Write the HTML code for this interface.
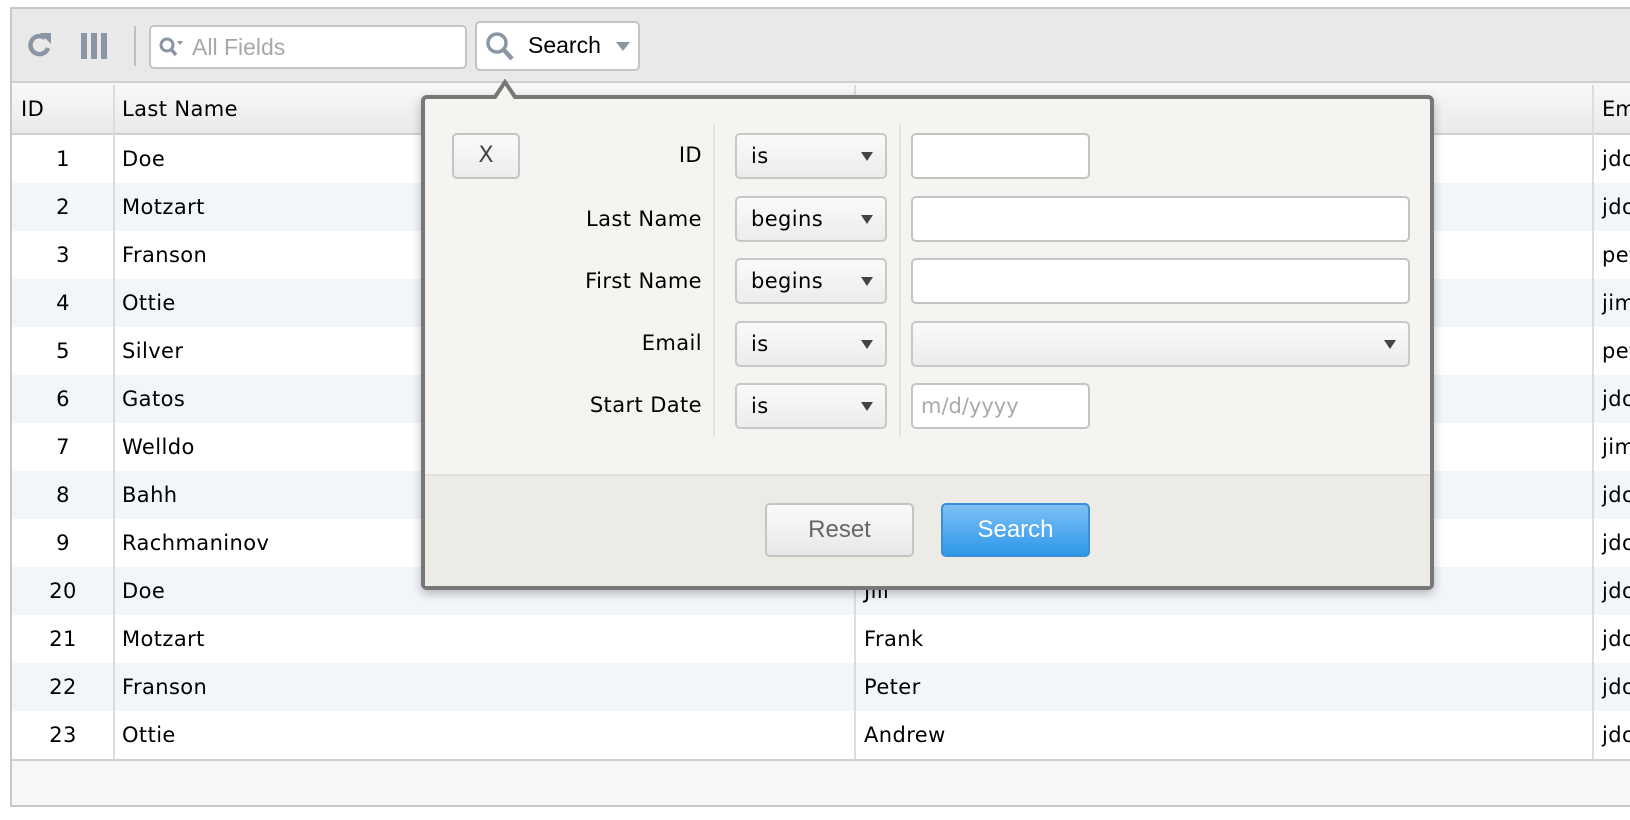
<!DOCTYPE html>
<html><head><meta charset="utf-8"><style>
*{box-sizing:border-box;margin:0;padding:0}
body{width:1630px;height:820px;background:#fff;position:relative;overflow:hidden;font-family:"DejaVu Sans","Liberation Sans",sans-serif;color:#000}
.abs{position:absolute}
#frame{left:10px;top:7px;width:1620px;height:800px;border:2px solid #c8c8c8;border-right:none;background:#f7f7f7}
#tb{left:12px;top:9px;width:1618px;height:74px;background:#e9e9e9;border-bottom:2px solid #cfcfcf}
#hdr{left:12px;top:85px;width:1618px;height:50px;background:linear-gradient(#f8f8f8,#eaeaea);border-bottom:2px solid #d0d0d0;font-size:20px}
.row{position:absolute;left:12px;width:1618px;height:48px;font-size:21px;line-height:48px;background:#fff;letter-spacing:0.4px;overflow:hidden}
.row.alt{background:#f2f5fa}
.c1{position:absolute;left:0;width:102px;text-align:center}
.c2{position:absolute;left:110px}
.c3{position:absolute;left:852px}
.c4{position:absolute;left:1590px}
.vl{position:absolute;top:85px;width:2px;height:674px;background:#dcdcdc;z-index:2}
.inp{background:#fff;border:2px solid #c4c4c4;border-radius:5px}
.sel{background:linear-gradient(#fafafa,#ececec);border:2px solid #c8c8c8;border-radius:5px;font-size:21px;line-height:42px;padding-left:14px;letter-spacing:0.4px}
.sel:after{content:"";position:absolute;right:12px;top:17px;border-left:6px solid transparent;border-right:6px solid transparent;border-top:9px solid #444}
.lbl{position:absolute;left:482px;font-size:21px;width:220px;text-align:right;letter-spacing:0.4px}
</style></head><body>
<div id="frame" class="abs"></div>
<div id="tb" class="abs"></div>
<svg class="abs" style="left:24px;top:30px" width="30" height="30" viewBox="0 0 30 30"><path d="M21 8A9 9 0 1 0 24 18" fill="none" stroke="#8a96a3" stroke-width="4.5"/><path d="M16 3L27 3L27 14Z" fill="#8a96a3"/></svg>
<div class="abs" style="left:81px;top:33px;width:6px;height:26px;background:#8a96a3"></div>
<div class="abs" style="left:91px;top:33px;width:6px;height:26px;background:#8a96a3"></div>
<div class="abs" style="left:101px;top:33px;width:6px;height:26px;background:#8a96a3"></div>
<div class="abs" style="left:134px;top:26px;width:2px;height:40px;background:#c0c0c0"></div>
<div class="abs inp" style="left:149px;top:25px;width:318px;height:44px"></div>
<svg class="abs" style="left:158px;top:36px" width="28" height="24" viewBox="0 0 28 24"><circle cx="9" cy="9" r="6" fill="none" stroke="#8a96a3" stroke-width="3"/><path d="M13 13L18 19" stroke="#8a96a3" stroke-width="3.5"/><path d="M19 5h6l-3 4z" fill="#8a96a3"/></svg>
<div class="abs" style="left:192px;top:34px;font-size:23px;color:#a8a8a8;font-family:'Liberation Sans',sans-serif">All Fields</div>
<div class="abs inp" style="left:475px;top:21px;width:165px;height:50px"></div>
<svg class="abs" style="left:484px;top:30px" width="34" height="34" viewBox="0 0 34 34"><circle cx="13" cy="13" r="9" fill="none" stroke="#8a96a3" stroke-width="3.5"/><path d="M19.5 19.5L28 29" stroke="#8a96a3" stroke-width="4.5"/></svg>
<div class="abs" style="left:528px;top:32px;font-size:23px;font-family:'Liberation Sans',sans-serif">Search</div>
<div class="abs" style="left:616px;top:42px;border-left:7px solid transparent;border-right:7px solid transparent;border-top:9px solid #8a96a3"></div>
<div id="hdr" class="abs"></div>
<div class="abs" style="left:21px;top:97px;font-size:21px;letter-spacing:0.4px">ID</div>
<div class="abs" style="left:122px;top:97px;font-size:21px;letter-spacing:0.4px">Last Name</div>
<div class="abs" style="left:1602px;top:97px;font-size:21px;width:28px;overflow:hidden;white-space:nowrap">Em</div>
<div class="vl" style="left:113px"></div><div class="vl" style="left:854px"></div><div class="vl" style="left:1592px"></div>
<div class="row" style="top:135px"><span class="c1">1</span><span class="c2">Doe</span><span class="c3">John</span><span class="c4">jdo</span></div>
<div class="row alt" style="top:183px"><span class="c1">2</span><span class="c2">Motzart</span><span class="c3">John</span><span class="c4">jdo</span></div>
<div class="row" style="top:231px"><span class="c1">3</span><span class="c2">Franson</span><span class="c3">Peter</span><span class="c4">pet</span></div>
<div class="row alt" style="top:279px"><span class="c1">4</span><span class="c2">Ottie</span><span class="c3">Jim</span><span class="c4">jim</span></div>
<div class="row" style="top:327px"><span class="c1">5</span><span class="c2">Silver</span><span class="c3">Peter</span><span class="c4">pet</span></div>
<div class="row alt" style="top:375px"><span class="c1">6</span><span class="c2">Gatos</span><span class="c3">John</span><span class="c4">jdo</span></div>
<div class="row" style="top:423px"><span class="c1">7</span><span class="c2">Welldo</span><span class="c3">Jim</span><span class="c4">jim</span></div>
<div class="row alt" style="top:471px"><span class="c1">8</span><span class="c2">Bahh</span><span class="c3">John</span><span class="c4">jdo</span></div>
<div class="row" style="top:519px"><span class="c1">9</span><span class="c2">Rachmaninov</span><span class="c3">John</span><span class="c4">jdo</span></div>
<div class="row alt" style="top:567px"><span class="c1">20</span><span class="c2">Doe</span><span class="c3">Jill</span><span class="c4">jdo</span></div>
<div class="row" style="top:615px"><span class="c1">21</span><span class="c2">Motzart</span><span class="c3">Frank</span><span class="c4">jdo</span></div>
<div class="row alt" style="top:663px"><span class="c1">22</span><span class="c2">Franson</span><span class="c3">Peter</span><span class="c4">jdo</span></div>
<div class="row" style="top:711px"><span class="c1">23</span><span class="c2">Ottie</span><span class="c3">Andrew</span><span class="c4">jdo</span></div>
<div class="abs" style="left:12px;top:759px;width:1618px;height:2px;background:#d0d0d0"></div>
<!-- popup -->
<div class="abs" style="left:421px;top:95px;width:1013px;height:495px;background:#f5f4f0;border:4px solid #777;border-radius:6px;box-shadow:0 4px 10px rgba(0,0,0,.25);z-index:3"></div>
<div class="abs" style="left:425px;top:474px;width:1005px;height:112px;background:#ecebe6;border-top:2px solid #e2e1dc;z-index:3"></div>
<svg class="abs" style="left:482px;top:79px;z-index:4" width="46" height="22" viewBox="0 0 46 22"><path d="M0 20L13 20L23 3L33 20L46 20L46 22L0 22Z" fill="#f5f4f0"/><path d="M0 18L13 18L23 3L33 18L46 18" fill="none" stroke="#777" stroke-width="4"/><rect x="0" y="20" width="46" height="2" fill="#f5f4f0"/></svg>
<div style="position:absolute;z-index:5;left:0;top:0;width:1630px;height:820px">
<div class="abs" style="left:452px;top:133px;width:68px;height:46px;border:2px solid #c4c4c4;border-radius:5px;background:linear-gradient(#fafafa,#ececec);text-align:center;line-height:42px;font-size:22px;color:#444">X</div>
<div class="abs" style="left:713px;top:125px;width:2px;height:312px;background:#e3e2dd"></div>
<div class="abs" style="left:899px;top:125px;width:2px;height:312px;background:#e3e2dd"></div>
<div class="lbl" style="top:143px">ID</div>
<div class="lbl" style="top:207px">Last Name</div>
<div class="lbl" style="top:269px">First Name</div>
<div class="lbl" style="top:331px">Email</div>
<div class="lbl" style="top:393px">Start Date</div>
<div class="abs sel" style="left:735px;top:133px;width:152px;height:46px">is</div>
<div class="abs sel" style="left:735px;top:196px;width:152px;height:46px">begins</div>
<div class="abs sel" style="left:735px;top:258px;width:152px;height:46px">begins</div>
<div class="abs sel" style="left:735px;top:321px;width:152px;height:46px">is</div>
<div class="abs sel" style="left:735px;top:383px;width:152px;height:46px">is</div>
<div class="abs inp" style="left:911px;top:133px;width:179px;height:46px"></div>
<div class="abs inp" style="left:911px;top:196px;width:499px;height:46px"></div>
<div class="abs inp" style="left:911px;top:258px;width:499px;height:46px"></div>
<div class="abs sel" style="left:911px;top:321px;width:499px;height:46px"></div>
<div class="abs inp" style="left:911px;top:383px;width:179px;height:46px;font-size:21px;color:#aaa;padding-left:8px;line-height:42px">m/d/yyyy</div>
<div class="abs" style="left:765px;top:503px;width:149px;height:54px;border:2px solid #c4c4c4;border-radius:5px;background:linear-gradient(#fafafa,#e8e8e8);text-align:center;line-height:50px;font-size:24px;color:#666;font-family:'Liberation Sans',sans-serif">Reset</div>
<div class="abs" style="left:941px;top:503px;width:149px;height:54px;border:2px solid #3a8ed8;border-radius:5px;background:linear-gradient(#7cc0f6,#2e98e8);text-align:center;line-height:50px;font-size:24px;color:#fff;font-family:'Liberation Sans',sans-serif">Search</div>
</div>
</body></html>
